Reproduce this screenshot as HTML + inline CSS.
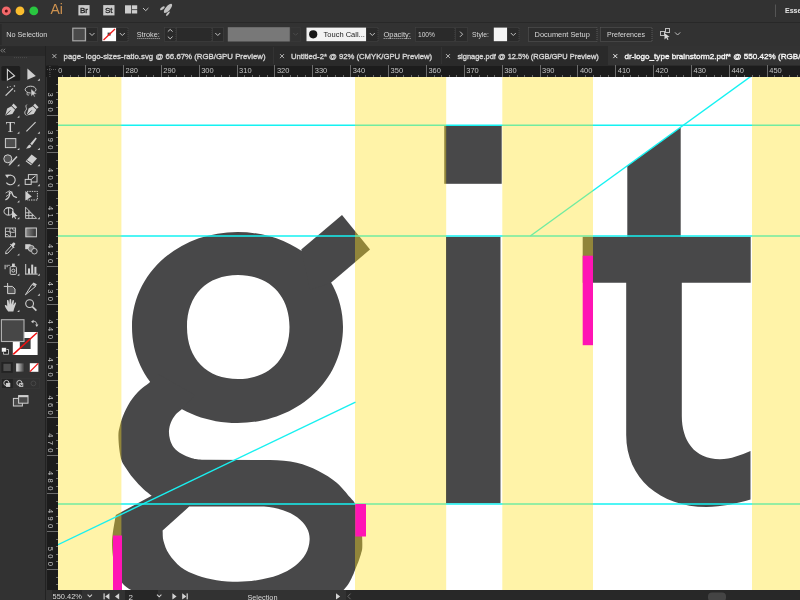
<!DOCTYPE html>
<html><head><meta charset="utf-8">
<style>
*{margin:0;padding:0;box-sizing:border-box}
html,body{width:800px;height:600px;overflow:hidden;background:#323232;font-family:"Liberation Sans",sans-serif;color:#d6d6d6}
.abs{position:absolute}
#app{will-change:transform;position:absolute;left:0;top:0;width:800px;height:600px;overflow:hidden;background:#323232}
#topbar{left:0;top:0;width:800px;height:22px;background:#323232}
#sep1{left:0;top:22px;width:800px;height:1px;background:#282828}
#ctrl{left:0;top:23px;width:800px;height:23px;background:#323232}
.t{position:absolute;white-space:nowrap;font-size:8.5px;line-height:10px;color:#d8d8d8}
#tabs{left:46px;top:46px;width:754px;height:19.5px;background:#2a2a2a}
#tabactive{left:608px;top:46px;width:192px;height:19px;background:#333333}
#hruler{left:46px;top:65.5px;width:754px;height:11.5px;background:#1c1c1c}
#vruler{left:46.6px;top:65.5px;width:11.4px;height:524.5px;background:#1c1c1c}
#status{left:46px;top:590px;width:754px;height:10px;background:#282828}
#tools{left:0;top:46px;width:46px;height:554px;background:#323232}
#toolhead{left:0;top:46px;width:46px;height:10px;background:#2a2a2a}
.tb{font-weight:normal;font-size:8.2px;color:#d4d4d4;-webkit-text-stroke:0.35px currentColor}
.fld{position:absolute;background:#2b2b2b;border:1px dotted #444}
</style></head><body>
<div id="app">
<div id="topbar" class="abs"></div>
<div id="sep1" class="abs"></div>
<div id="ctrl" class="abs"></div>
<div id="tools" class="abs"></div>
<div id="toolhead" class="abs"></div>
<div id="tabs" class="abs"></div>
<div id="tabactive" class="abs"></div>
<svg class="abs" style="left:58px;top:77px" width="742" height="513" viewBox="58 77 742 513">
<rect x="58" y="76" width="742" height="514" fill="#ffffff"/>
<g fill="#484849">
<path fill-rule="evenodd" d="M237.5 232 C296 232 343 273 343 327 C343 382 296 423 237.5 423 C179 423 132 382 132 327 C132 273 179 232 237.5 232 Z M238 275 C207 275 187 295 187 327 C187 359 207 379 238 379 C269 379 289.5 359 289.5 327 C289.5 295 269 275 238 275 Z"/>
<path d="M301.25 249.5 L342 215 L370 249.5 L331.25 282.5 L310 290 Z"/>
<path fill-rule="evenodd" d="M158.0 374.0 C155.0 377.0 152.0 380.3 149.0 383.0 C146.0 385.7 143.2 386.8 140.0 390.0 C136.8 393.2 132.8 397.7 130.0 402.0 C127.2 406.3 124.8 411.7 123.0 416.0 C121.2 420.3 120.2 424.7 119.4 428.0 C118.6 431.3 118.4 432.3 118.4 436.0 C118.4 439.7 118.9 446.0 119.4 450.0 C119.9 454.0 120.5 457.2 121.4 460.0 C122.3 462.8 123.0 463.6 125.0 466.7 C127.0 469.8 130.2 474.6 133.3 478.3 C136.4 482.0 140.2 486.1 143.3 489.0 C146.4 491.9 148.9 493.5 151.7 495.8 L115.8 515.0 C114.8 521.0 113.4 528.0 112.8 533.0 C112.2 538.0 111.9 540.5 112.0 545.0 C112.1 549.5 112.7 555.5 113.5 560.0 C114.3 564.5 115.4 568.0 117.0 572.0 C118.6 576.0 120.5 580.9 123.0 584.0 C125.5 587.1 128.3 588.2 132.0 590.5 C135.7 592.8 140.3 595.8 145.0 598.0 C149.7 600.2 155.0 602.0 160.0 604.0 L325.0 604.0 C328.7 601.7 332.8 599.4 336.0 597.0 C339.2 594.6 341.8 591.8 344.0 589.5 C346.2 587.2 347.5 585.4 349.0 583.0 C350.5 580.6 352.0 577.2 353.0 575.0 C354.0 572.8 354.0 572.5 355.0 570.0 C356.0 567.5 358.0 562.8 359.0 560.0 C360.0 557.2 360.6 555.2 361.2 553.0 C361.8 550.8 362.2 550.5 362.3 546.7 C362.4 542.9 362.2 535.3 361.7 530.0 C361.2 524.7 360.4 519.3 359.3 515.0 C358.2 510.7 356.9 506.9 355.3 504.0 C353.8 501.1 353.1 500.9 350.0 497.3 C346.9 493.8 342.0 487.1 336.7 482.7 C331.4 478.3 324.7 474.0 318.0 470.7 C311.3 467.4 304.7 464.5 296.7 462.7 C288.7 460.9 279.4 460.4 270.0 460.0 L204.0 459.8 C197.7 459.5 195.8 459.2 192.0 458.2 C188.2 457.2 184.5 455.5 181.5 453.8 C178.5 452.0 175.9 450.1 174.0 447.8 C172.1 445.4 170.8 442.4 170.0 439.5 C169.2 436.6 168.8 433.4 169.0 430.5 C169.2 427.6 169.9 424.9 171.0 422.2 C172.1 419.6 173.8 416.9 175.5 414.8 C177.2 412.6 179.5 411.2 181.5 409.5 L195 395 Z M189.2 506.6 L264.0 506.6 C271.2 507.2 277.5 508.4 283.0 510.2 C288.5 512.0 293.2 514.3 297.2 517.3 C301.2 520.3 304.7 524.2 306.8 528.0 C308.9 531.8 309.8 535.6 309.6 539.9 C309.4 544.2 308.1 549.6 305.6 554.0 C303.2 558.4 299.4 562.5 294.9 566.0 C290.3 569.5 284.6 572.6 278.3 575.0 C272.0 577.4 263.6 579.1 256.9 580.2 C250.2 581.3 244.6 581.7 237.9 581.7 C231.2 581.7 223.2 581.2 216.5 580.2 C209.8 579.2 203.4 577.7 197.5 575.5 C191.6 573.3 185.7 570.8 180.9 567.2 C176.2 563.6 171.9 558.5 169.0 554.1 C166.1 549.7 164.6 545.0 163.5 541.0 C162.4 537.0 162.9 533.9 162.6 530.4 Z"/>
<rect x="444.25" y="126" width="57.45" height="57.8"/>
<rect x="446" y="236.8" width="54.5" height="266.5"/>
<path d="M627.3 166 L680.7 127.3 L680.7 236.7 L750.7 236.7 L750.7 282.7 L681.8 282.7 L681.8 416 C681.8 440 694 459.2 720 459.2 C731 459.2 741 455 750.5 451 L750.5 499.6 C737 503.5 722 507 706.5 507 C660 507 626.2 478 626.2 435 L626.2 282.7 L582.7 282.7 L582.7 236.7 L627.3 236.7 Z"/>
</g>
<g stroke="#14f2f2" stroke-width="1.4" fill="none">
<line x1="58" y1="125.3" x2="800" y2="125.3"/>
<line x1="58" y1="236" x2="800" y2="236"/>
<line x1="58" y1="504" x2="800" y2="504"/>
<line x1="530.3" y1="236" x2="751.4" y2="76"/>
</g>
<g fill="#ffe126" fill-opacity="0.40">
<rect x="58" y="76" width="63.4" height="514"/>
<rect x="355" y="76" width="91.2" height="514"/>
<rect x="502.3" y="76" width="90.7" height="514"/>
<rect x="752" y="76" width="48" height="514"/>
</g>
<g fill="#ff14b4">
<rect x="113" y="535.5" width="9" height="55"/>
<rect x="355.3" y="504" width="10.7" height="32.5"/>
<rect x="582.7" y="255.7" width="10.3" height="89.5"/>
</g>
<g stroke="#19f0f0" stroke-width="1.4" fill="none">
<line x1="58" y1="544.7" x2="355.5" y2="402.1"/>
</g>
</svg>
<div id="hruler" class="abs"></div>
<div id="vruler" class="abs"></div>
<svg class="abs" style="left:46px;top:65px" width="754" height="525" viewBox="46 65 754 525" font-family="Liberation Sans, sans-serif" font-size="8" fill="#c4c4c4">
<g stroke="#6c6c6c" stroke-width="1">
<line x1="62.5" y1="75" x2="62.5" y2="77"/>
<line x1="70.5" y1="75" x2="70.5" y2="77"/>
<line x1="78.5" y1="75" x2="78.5" y2="77"/>
<line x1="85.5" y1="65" x2="85.5" y2="77"/>
<line x1="93.5" y1="75" x2="93.5" y2="77"/>
<line x1="100.5" y1="75" x2="100.5" y2="77"/>
<line x1="108.5" y1="75" x2="108.5" y2="77"/>
<line x1="115.5" y1="75" x2="115.5" y2="77"/>
<line x1="123.5" y1="65" x2="123.5" y2="77"/>
<line x1="131.5" y1="75" x2="131.5" y2="77"/>
<line x1="138.5" y1="75" x2="138.5" y2="77"/>
<line x1="146.5" y1="75" x2="146.5" y2="77"/>
<line x1="153.5" y1="75" x2="153.5" y2="77"/>
<line x1="161.5" y1="65" x2="161.5" y2="77"/>
<line x1="168.5" y1="75" x2="168.5" y2="77"/>
<line x1="176.5" y1="75" x2="176.5" y2="77"/>
<line x1="184.5" y1="75" x2="184.5" y2="77"/>
<line x1="191.5" y1="75" x2="191.5" y2="77"/>
<line x1="199.5" y1="65" x2="199.5" y2="77"/>
<line x1="206.5" y1="75" x2="206.5" y2="77"/>
<line x1="214.5" y1="75" x2="214.5" y2="77"/>
<line x1="221.5" y1="75" x2="221.5" y2="77"/>
<line x1="229.5" y1="75" x2="229.5" y2="77"/>
<line x1="237.5" y1="65" x2="237.5" y2="77"/>
<line x1="244.5" y1="75" x2="244.5" y2="77"/>
<line x1="252.5" y1="75" x2="252.5" y2="77"/>
<line x1="259.5" y1="75" x2="259.5" y2="77"/>
<line x1="267.5" y1="75" x2="267.5" y2="77"/>
<line x1="274.5" y1="65" x2="274.5" y2="77"/>
<line x1="282.5" y1="75" x2="282.5" y2="77"/>
<line x1="290.5" y1="75" x2="290.5" y2="77"/>
<line x1="297.5" y1="75" x2="297.5" y2="77"/>
<line x1="305.5" y1="75" x2="305.5" y2="77"/>
<line x1="312.5" y1="65" x2="312.5" y2="77"/>
<line x1="320.5" y1="75" x2="320.5" y2="77"/>
<line x1="327.5" y1="75" x2="327.5" y2="77"/>
<line x1="335.5" y1="75" x2="335.5" y2="77"/>
<line x1="343.5" y1="75" x2="343.5" y2="77"/>
<line x1="350.5" y1="65" x2="350.5" y2="77"/>
<line x1="358.5" y1="75" x2="358.5" y2="77"/>
<line x1="365.5" y1="75" x2="365.5" y2="77"/>
<line x1="373.5" y1="75" x2="373.5" y2="77"/>
<line x1="380.5" y1="75" x2="380.5" y2="77"/>
<line x1="388.5" y1="65" x2="388.5" y2="77"/>
<line x1="396.5" y1="75" x2="396.5" y2="77"/>
<line x1="403.5" y1="75" x2="403.5" y2="77"/>
<line x1="411.5" y1="75" x2="411.5" y2="77"/>
<line x1="418.5" y1="75" x2="418.5" y2="77"/>
<line x1="426.5" y1="65" x2="426.5" y2="77"/>
<line x1="434.5" y1="75" x2="434.5" y2="77"/>
<line x1="441.5" y1="75" x2="441.5" y2="77"/>
<line x1="449.5" y1="75" x2="449.5" y2="77"/>
<line x1="456.5" y1="75" x2="456.5" y2="77"/>
<line x1="464.5" y1="65" x2="464.5" y2="77"/>
<line x1="471.5" y1="75" x2="471.5" y2="77"/>
<line x1="479.5" y1="75" x2="479.5" y2="77"/>
<line x1="487.5" y1="75" x2="487.5" y2="77"/>
<line x1="494.5" y1="75" x2="494.5" y2="77"/>
<line x1="502.5" y1="65" x2="502.5" y2="77"/>
<line x1="509.5" y1="75" x2="509.5" y2="77"/>
<line x1="517.5" y1="75" x2="517.5" y2="77"/>
<line x1="524.5" y1="75" x2="524.5" y2="77"/>
<line x1="532.5" y1="75" x2="532.5" y2="77"/>
<line x1="540.5" y1="65" x2="540.5" y2="77"/>
<line x1="547.5" y1="75" x2="547.5" y2="77"/>
<line x1="555.5" y1="75" x2="555.5" y2="77"/>
<line x1="562.5" y1="75" x2="562.5" y2="77"/>
<line x1="570.5" y1="75" x2="570.5" y2="77"/>
<line x1="577.5" y1="65" x2="577.5" y2="77"/>
<line x1="585.5" y1="75" x2="585.5" y2="77"/>
<line x1="593.5" y1="75" x2="593.5" y2="77"/>
<line x1="600.5" y1="75" x2="600.5" y2="77"/>
<line x1="608.5" y1="75" x2="608.5" y2="77"/>
<line x1="615.5" y1="65" x2="615.5" y2="77"/>
<line x1="623.5" y1="75" x2="623.5" y2="77"/>
<line x1="630.5" y1="75" x2="630.5" y2="77"/>
<line x1="638.5" y1="75" x2="638.5" y2="77"/>
<line x1="646.5" y1="75" x2="646.5" y2="77"/>
<line x1="653.5" y1="65" x2="653.5" y2="77"/>
<line x1="661.5" y1="75" x2="661.5" y2="77"/>
<line x1="668.5" y1="75" x2="668.5" y2="77"/>
<line x1="676.5" y1="75" x2="676.5" y2="77"/>
<line x1="683.5" y1="75" x2="683.5" y2="77"/>
<line x1="691.5" y1="65" x2="691.5" y2="77"/>
<line x1="699.5" y1="75" x2="699.5" y2="77"/>
<line x1="706.5" y1="75" x2="706.5" y2="77"/>
<line x1="714.5" y1="75" x2="714.5" y2="77"/>
<line x1="721.5" y1="75" x2="721.5" y2="77"/>
<line x1="729.5" y1="65" x2="729.5" y2="77"/>
<line x1="736.5" y1="75" x2="736.5" y2="77"/>
<line x1="744.5" y1="75" x2="744.5" y2="77"/>
<line x1="752.5" y1="75" x2="752.5" y2="77"/>
<line x1="759.5" y1="75" x2="759.5" y2="77"/>
<line x1="767.5" y1="65" x2="767.5" y2="77"/>
<line x1="774.5" y1="75" x2="774.5" y2="77"/>
<line x1="782.5" y1="75" x2="782.5" y2="77"/>
<line x1="789.5" y1="75" x2="789.5" y2="77"/>
<line x1="797.5" y1="75" x2="797.5" y2="77"/>
<line x1="805.5" y1="65" x2="805.5" y2="77"/>
<line x1="56" y1="84.5" x2="58" y2="84.5"/>
<line x1="56" y1="92.5" x2="58" y2="92.5"/>
<line x1="56" y1="99.5" x2="58" y2="99.5"/>
<line x1="56" y1="107.5" x2="58" y2="107.5"/>
<line x1="47" y1="115.5" x2="58" y2="115.5"/>
<line x1="56" y1="122.5" x2="58" y2="122.5"/>
<line x1="56" y1="130.5" x2="58" y2="130.5"/>
<line x1="56" y1="137.5" x2="58" y2="137.5"/>
<line x1="56" y1="145.5" x2="58" y2="145.5"/>
<line x1="47" y1="152.5" x2="58" y2="152.5"/>
<line x1="56" y1="160.5" x2="58" y2="160.5"/>
<line x1="56" y1="168.5" x2="58" y2="168.5"/>
<line x1="56" y1="175.5" x2="58" y2="175.5"/>
<line x1="56" y1="183.5" x2="58" y2="183.5"/>
<line x1="47" y1="190.5" x2="58" y2="190.5"/>
<line x1="56" y1="198.5" x2="58" y2="198.5"/>
<line x1="56" y1="205.5" x2="58" y2="205.5"/>
<line x1="56" y1="213.5" x2="58" y2="213.5"/>
<line x1="56" y1="221.5" x2="58" y2="221.5"/>
<line x1="47" y1="228.5" x2="58" y2="228.5"/>
<line x1="56" y1="236.5" x2="58" y2="236.5"/>
<line x1="56" y1="243.5" x2="58" y2="243.5"/>
<line x1="56" y1="251.5" x2="58" y2="251.5"/>
<line x1="56" y1="258.5" x2="58" y2="258.5"/>
<line x1="47" y1="266.5" x2="58" y2="266.5"/>
<line x1="56" y1="274.5" x2="58" y2="274.5"/>
<line x1="56" y1="281.5" x2="58" y2="281.5"/>
<line x1="56" y1="289.5" x2="58" y2="289.5"/>
<line x1="56" y1="296.5" x2="58" y2="296.5"/>
<line x1="47" y1="304.5" x2="58" y2="304.5"/>
<line x1="56" y1="311.5" x2="58" y2="311.5"/>
<line x1="56" y1="319.5" x2="58" y2="319.5"/>
<line x1="56" y1="327.5" x2="58" y2="327.5"/>
<line x1="56" y1="334.5" x2="58" y2="334.5"/>
<line x1="47" y1="342.5" x2="58" y2="342.5"/>
<line x1="56" y1="349.5" x2="58" y2="349.5"/>
<line x1="56" y1="357.5" x2="58" y2="357.5"/>
<line x1="56" y1="364.5" x2="58" y2="364.5"/>
<line x1="56" y1="372.5" x2="58" y2="372.5"/>
<line x1="47" y1="380.5" x2="58" y2="380.5"/>
<line x1="56" y1="387.5" x2="58" y2="387.5"/>
<line x1="56" y1="395.5" x2="58" y2="395.5"/>
<line x1="56" y1="402.5" x2="58" y2="402.5"/>
<line x1="56" y1="410.5" x2="58" y2="410.5"/>
<line x1="47" y1="417.5" x2="58" y2="417.5"/>
<line x1="56" y1="425.5" x2="58" y2="425.5"/>
<line x1="56" y1="433.5" x2="58" y2="433.5"/>
<line x1="56" y1="440.5" x2="58" y2="440.5"/>
<line x1="56" y1="448.5" x2="58" y2="448.5"/>
<line x1="47" y1="455.5" x2="58" y2="455.5"/>
<line x1="56" y1="463.5" x2="58" y2="463.5"/>
<line x1="56" y1="470.5" x2="58" y2="470.5"/>
<line x1="56" y1="478.5" x2="58" y2="478.5"/>
<line x1="56" y1="486.5" x2="58" y2="486.5"/>
<line x1="47" y1="493.5" x2="58" y2="493.5"/>
<line x1="56" y1="501.5" x2="58" y2="501.5"/>
<line x1="56" y1="508.5" x2="58" y2="508.5"/>
<line x1="56" y1="516.5" x2="58" y2="516.5"/>
<line x1="56" y1="523.5" x2="58" y2="523.5"/>
<line x1="47" y1="531.5" x2="58" y2="531.5"/>
<line x1="56" y1="539.5" x2="58" y2="539.5"/>
<line x1="56" y1="546.5" x2="58" y2="546.5"/>
<line x1="56" y1="554.5" x2="58" y2="554.5"/>
<line x1="56" y1="561.5" x2="58" y2="561.5"/>
<line x1="47" y1="569.5" x2="58" y2="569.5"/>
<line x1="56" y1="577.5" x2="58" y2="577.5"/>
<line x1="56" y1="584.5" x2="58" y2="584.5"/>
</g>
<text x="58.3" y="73.4" textLength="3.9" lengthAdjust="spacingAndGlyphs">0</text>
<text x="87.6" y="73.4" textLength="12.5" lengthAdjust="spacingAndGlyphs">270</text>
<text x="125.5" y="73.4" textLength="12.5" lengthAdjust="spacingAndGlyphs">280</text>
<text x="163.3" y="73.4" textLength="12.5" lengthAdjust="spacingAndGlyphs">290</text>
<text x="201.2" y="73.4" textLength="12.5" lengthAdjust="spacingAndGlyphs">300</text>
<text x="239.1" y="73.4" textLength="12.5" lengthAdjust="spacingAndGlyphs">310</text>
<text x="276.9" y="73.4" textLength="12.5" lengthAdjust="spacingAndGlyphs">320</text>
<text x="314.8" y="73.4" textLength="12.5" lengthAdjust="spacingAndGlyphs">330</text>
<text x="352.7" y="73.4" textLength="12.5" lengthAdjust="spacingAndGlyphs">340</text>
<text x="390.6" y="73.4" textLength="12.5" lengthAdjust="spacingAndGlyphs">350</text>
<text x="428.4" y="73.4" textLength="12.5" lengthAdjust="spacingAndGlyphs">360</text>
<text x="466.3" y="73.4" textLength="12.5" lengthAdjust="spacingAndGlyphs">370</text>
<text x="504.2" y="73.4" textLength="12.5" lengthAdjust="spacingAndGlyphs">380</text>
<text x="542.0" y="73.4" textLength="12.5" lengthAdjust="spacingAndGlyphs">390</text>
<text x="579.9" y="73.4" textLength="12.5" lengthAdjust="spacingAndGlyphs">400</text>
<text x="617.8" y="73.4" textLength="12.5" lengthAdjust="spacingAndGlyphs">410</text>
<text x="655.6" y="73.4" textLength="12.5" lengthAdjust="spacingAndGlyphs">420</text>
<text x="693.5" y="73.4" textLength="12.5" lengthAdjust="spacingAndGlyphs">430</text>
<text x="731.4" y="73.4" textLength="12.5" lengthAdjust="spacingAndGlyphs">440</text>
<text x="769.3" y="73.4" textLength="12.5" lengthAdjust="spacingAndGlyphs">450</text>
<text x="807.1" y="73.4" textLength="12.5" lengthAdjust="spacingAndGlyphs">460</text>
<text transform="translate(47.5 92.4) rotate(90)" font-size="7.5" letter-spacing="3.35">380</text>
<text transform="translate(47.5 130.3) rotate(90)" font-size="7.5" letter-spacing="3.35">390</text>
<text transform="translate(47.5 168.1) rotate(90)" font-size="7.5" letter-spacing="3.35">400</text>
<text transform="translate(47.5 206.0) rotate(90)" font-size="7.5" letter-spacing="3.35">410</text>
<text transform="translate(47.5 243.9) rotate(90)" font-size="7.5" letter-spacing="3.35">420</text>
<text transform="translate(47.5 281.8) rotate(90)" font-size="7.5" letter-spacing="3.35">430</text>
<text transform="translate(47.5 319.6) rotate(90)" font-size="7.5" letter-spacing="3.35">440</text>
<text transform="translate(47.5 357.5) rotate(90)" font-size="7.5" letter-spacing="3.35">450</text>
<text transform="translate(47.5 395.4) rotate(90)" font-size="7.5" letter-spacing="3.35">460</text>
<text transform="translate(47.5 433.2) rotate(90)" font-size="7.5" letter-spacing="3.35">470</text>
<text transform="translate(47.5 471.1) rotate(90)" font-size="7.5" letter-spacing="3.35">480</text>
<text transform="translate(47.5 509.0) rotate(90)" font-size="7.5" letter-spacing="3.35">490</text>
<text transform="translate(47.5 546.8) rotate(90)" font-size="7.5" letter-spacing="3.35">500</text>
<rect x="46.6" y="65.5" width="11.4" height="11.5" fill="#1c1c1c"/>
<g stroke="#5c5c5c" stroke-width="1" stroke-dasharray="1 1"><line x1="47" y1="69.5" x2="57" y2="69.5"/><line x1="49.9" y1="66" x2="49.9" y2="77"/></g>
</svg>
<div id="status" class="abs"></div>
<svg class="abs" style="left:0;top:46px" width="46" height="554" viewBox="0 46 46 554">
<rect x="0" y="47" width="45" height="8.5" fill="#292929"/>
<rect x="45" y="46" width="1.4" height="554" fill="#222"/>
<g fill="none" stroke="#8c8c8c" stroke-width="0.9"><path d="M2.6 48.8 L1 50.6 L2.6 52.4"/><path d="M5 48.8 L3.4 50.6 L5 52.4"/></g>
<line x1="14" y1="57.6" x2="27" y2="57.6" stroke="#4c4c4c" stroke-width="1" stroke-dasharray="1 1"/>
<rect x="1.4" y="66" width="18.8" height="14.8" rx="1.5" fill="#1f1f1f"/>
<g fill="#cfcfcf" stroke="none">
<!-- sub-tool corner triangles -->
<path d="M39.8 78.6 L39.8 80.8 L37.6 80.8 Z"/>
<path d="M19.4 115.6 L19.4 117.8 L17.2 117.8 Z"/>
<path d="M19.4 131.6 L19.4 133.8 L17.2 133.8 Z"/><path d="M39.8 131.6 L39.8 133.8 L37.6 133.8 Z"/>
<path d="M19.4 147.8 L19.4 150 L17.2 150 Z"/><path d="M39.8 147.8 L39.8 150 L37.6 150 Z"/>
<path d="M19.4 164 L19.4 166.2 L17.2 166.2 Z"/><path d="M39.8 164 L39.8 166.2 L37.6 166.2 Z"/>
<path d="M19.4 184 L19.4 186.2 L17.2 186.2 Z"/><path d="M39.8 184 L39.8 186.2 L37.6 186.2 Z"/>
<path d="M19.4 200.2 L19.4 202.4 L17.2 202.4 Z"/>
<path d="M19.4 217 L19.4 219.2 L17.2 219.2 Z"/><path d="M39.8 217 L39.8 219.2 L37.6 219.2 Z"/>
<path d="M19.4 253.4 L19.4 255.6 L17.2 255.6 Z"/>
<path d="M19.4 273.6 L19.4 275.8 L17.2 275.8 Z"/><path d="M39.8 273.6 L39.8 275.8 L37.6 275.8 Z"/>
<path d="M39.8 293.6 L39.8 295.8 L37.6 295.8 Z"/>
<path d="M19.4 309.8 L19.4 312 L17.2 312 Z"/>
</g>
<!-- row1: selection / direct selection -->
<path d="M7.4 69.4 L7.4 80 L14.6 75.8 Z" fill="none" stroke="#d4d4d4" stroke-width="1.1" stroke-linejoin="miter"/>
<path d="M27.4 68.6 L27.4 79.8 L35.8 76 Z" fill="#cfcfcf"/>
<!-- row2: magic wand / lasso -->
<g stroke="#cfcfcf" stroke-width="1.3" fill="none"><line x1="5.6" y1="95.6" x2="13" y2="88.4"/></g>
<g fill="#cfcfcf"><circle cx="7.6" cy="87.2" r=".7"/><circle cx="14.4" cy="86" r=".8"/><circle cx="14.6" cy="91" r=".7"/><circle cx="10.2" cy="86.6" r=".5"/></g>
<g fill="none" stroke="#cfcfcf" stroke-width="1"><ellipse cx="30.6" cy="89.6" rx="5.4" ry="3.4"/><path d="M27.8 92.6 C26 94 27.6 96 29.2 94.6"/></g>
<path d="M31 88.8 L31 96.6 L33 94.8 L34.2 97 L35.2 96.4 L34 94.2 L36.8 94 Z" fill="#cfcfcf" stroke="#323232" stroke-width=".5"/>
<!-- row3: pen / curvature -->
<g fill="#cfcfcf">
<path d="M5.2 115.6 L7.2 108.6 L11.4 106.2 L15 109.8 L12.4 114 Z"/><path d="M11.8 105.4 L13.6 103.6 L17.2 107.2 L15.4 109 Z"/>
<path d="M24.6 115.6 L26.6 108.6 L30.8 106.2 L34.4 109.8 L31.8 114 Z" transform="translate(2 0)"/><path d="M33.2 105.4 L35 103.6 L38.6 107.2 L36.8 109 Z"/>
</g>
<path d="M5.2 115.6 L10.4 110.4" stroke="#323232" stroke-width=".9"/><path d="M26.6 115.6 L31.8 110.4" stroke="#323232" stroke-width=".9"/>
<path d="M26.8 104.6 C24.4 106.6 28 108.4 25.6 110.6 C24.2 112 24.6 114.4 26.4 115.4" fill="none" stroke="#cfcfcf" stroke-width=".9"/>
<!-- row4: type / line -->
<line x1="26.4" y1="131.4" x2="35.6" y2="122.2" stroke="#cfcfcf" stroke-width="1.1"/>
<!-- row5: rect / brush -->
<rect x="5.4" y="138.6" width="10.4" height="9" fill="#4e4e4e" stroke="#cfcfcf" stroke-width="1"/>
<g fill="#cfcfcf"><path d="M35.6 137.6 L36.8 138.6 L32 145.2 L30.2 143.8 Z"/><path d="M29.6 144.4 L31.4 146 C30.4 148.2 28 148.6 26 148.4 C27.6 147.4 27.4 145.4 29.6 144.4 Z"/></g>
<!-- row6: shaper / eraser -->
<circle cx="7.8" cy="158.8" r="4" fill="#555" stroke="#cfcfcf" stroke-width="1"/>
<path d="M9.6 164.6 L17 156.6" stroke="#cfcfcf" stroke-width="1.5" fill="none"/><path d="M8.6 165.8 L9.2 163.8 L10.4 165 Z" fill="#cfcfcf"/>
<path d="M25.6 161.2 L31.6 154.6 L37 158.4 L31 165.2 Z" fill="#cfcfcf"/><path d="M26.6 160.2 L31.8 163.9" stroke="#323232" stroke-width=".9"/>
<!-- row7: rotate / scale -->
<path d="M7.4 176.2 A4.8 4.8 0 1 1 6.4 182.6" fill="none" stroke="#cfcfcf" stroke-width="1.1"/><path d="M5 174.8 L8.8 174.6 L7.4 178.2 Z" fill="#cfcfcf"/>
<g fill="none" stroke="#cfcfcf" stroke-width="1"><rect x="28.4" y="174.6" width="8.6" height="7.4"/><rect x="25.2" y="179.4" width="6" height="5" fill="#323232"/><line x1="31.4" y1="179.2" x2="35.6" y2="175.8"/></g>
<!-- row8: warp / free transform -->
<path d="M5.4 199.8 C8.4 198.6 10.2 195.6 9.4 192.4 C11 190.4 12.2 193 12.6 194.6 C13.6 198 16 196 16.6 198" fill="none" stroke="#cfcfcf" stroke-width="1.4"/><path d="M5.6 193 L9.8 190.6 M6 196.6 L12.4 192" stroke="#cfcfcf" stroke-width=".8" fill="none"/>
<rect x="27" y="191.4" width="10.4" height="8.6" fill="none" stroke="#cfcfcf" stroke-width="1" stroke-dasharray="1.4 1"/><path d="M25.4 191 L25.4 200.4 L31.8 196.4 Z" fill="#cfcfcf"/>
<!-- row9: shape builder / perspective -->
<g fill="none" stroke="#cfcfcf" stroke-width="1"><ellipse cx="8.6" cy="211.4" rx="4.6" ry="3.8"/><path d="M5.4 208.6 C8 207 12 207.6 13.4 209.4"/><line x1="8.6" y1="207.6" x2="8.6" y2="215.2"/></g>
<path d="M12 210.6 L12 218.6 L14 216.8 L15.2 219 L16.2 218.4 L15 216.2 L17.6 216 Z" fill="#cfcfcf"/>
<g fill="none" stroke="#cfcfcf" stroke-width=".9"><path d="M25.6 207.2 L25.6 218.4 L36.6 218.4 Z"/><line x1="25.6" y1="212.8" x2="31" y2="212.8"/><line x1="28.8" y1="210.4" x2="28.8" y2="218.4"/><line x1="32.2" y1="214" x2="32.2" y2="218.4"/><line x1="25.6" y1="215.6" x2="33.8" y2="215.6"/></g>
<!-- row10: mesh / gradient -->
<g fill="none" stroke="#cfcfcf" stroke-width=".9"><rect x="5.4" y="228" width="10.2" height="8.8"/><path d="M5.4 232 C8 230 12 234 15.6 231.6 M10.2 228 C8.6 231 12 234 10 236.8 M5.4 234.6 C8 233.6 9 236 10 236.8 M12.4 228 C12 230 14 230.6 15.6 230"/></g>
<defs><linearGradient id="gr1" x1="0" x2="1" y1="0" y2="0"><stop offset="0" stop-color="#e8e8e8"/><stop offset="1" stop-color="#2e2e2e"/></linearGradient><linearGradient id="gr2" x1="0" x2="1" y1="0" y2="0"><stop offset="0" stop-color="#8a8a8a"/><stop offset="1" stop-color="#333"/></linearGradient></defs>
<rect x="25.8" y="228" width="10.6" height="8.8" fill="url(#gr2)" stroke="#cfcfcf" stroke-width="1"/>
<!-- row11: eyedropper / blend -->
<path d="M5.6 253.8 L6 251.6 L11.6 245.4 L13.4 247 L7.8 253.2 Z" fill="none" stroke="#cfcfcf" stroke-width="1"/><path d="M11.4 244.4 L13 242.8 C14 241.8 16.2 243.6 15 244.8 L13.6 246.4 L14.6 247.4 L13.8 248.2 L10 244.6 L10.8 243.8 Z" fill="#cfcfcf"/>
<rect x="25.2" y="244.2" width="5.4" height="5" fill="#cfcfcf"/><circle cx="31.2" cy="248.4" r="3" fill="#777" stroke="#cfcfcf" stroke-width=".9"/><circle cx="34.4" cy="251.2" r="2.8" fill="#323232" stroke="#cfcfcf" stroke-width=".9"/>
<!-- row12: symbol sprayer / graph -->
<g fill="none" stroke="#cfcfcf" stroke-width="1"><rect x="10.2" y="266.6" width="6.2" height="7.8" rx="1"/><circle cx="13.3" cy="270.6" r="1.5"/></g><rect x="12" y="263.6" width="2.8" height="3" fill="#cfcfcf"/>
<g fill="#cfcfcf"><rect x="4.6" y="264.8" width="1" height="4.4"/><rect x="6.6" y="264.8" width="1" height="2.4"/><rect x="8.4" y="264.8" width="1.2" height="1.2"/></g>
<g fill="#cfcfcf"><rect x="25.2" y="264" width="1" height="10.4"/><rect x="25.2" y="273.6" width="12.4" height="1"/><rect x="28" y="268.4" width="2" height="5.4"/><rect x="31.2" y="264.6" width="2" height="9.2"/><rect x="34.4" y="266.8" width="2" height="7"/></g>
<!-- row13: artboard / slice -->
<g fill="none" stroke="#cfcfcf" stroke-width="1"><line x1="7.6" y1="283" x2="7.6" y2="288"/><line x1="3.8" y1="286.4" x2="9" y2="286.4"/></g><path d="M7.6 286.4 L12.4 286.4 L15 289 L15 293.6 L7.6 293.6 Z" fill="#555" stroke="#cfcfcf" stroke-width="1"/>
<path d="M25.4 294.8 L32 284.4 L35.6 286.4 Z" fill="none" stroke="#cfcfcf" stroke-width="1"/><path d="M32.2 284 L33.4 282.4 L36.8 284.2 L35.8 286 Z" fill="#cfcfcf"/>
<!-- row14: hand / zoom -->
<path d="M8.2 311.6 C6.4 309 5 306.8 4.8 305.4 C5.4 304.6 6.4 305 7.2 306.4 L7 300.6 C7.6 299.8 8.4 300 8.6 300.8 L9.2 304.4 L9.6 299.4 C10.2 298.8 11 299 11.2 299.8 L11.4 304.4 L12.6 300.2 C13.2 299.8 14 300 14 300.8 L13.4 305.2 L15 302.6 C15.8 302.4 16.2 303 16 303.6 L14 309 L13.4 311.6 Z" fill="#cfcfcf"/>
<circle cx="29.6" cy="303.6" r="3.9" fill="none" stroke="#cfcfcf" stroke-width="1.1"/><line x1="32.4" y1="306.6" x2="36.4" y2="310.6" stroke="#cfcfcf" stroke-width="1.6"/>
<!-- fill / stroke -->
<rect x="12.8" y="332" width="24.8" height="23" fill="#fff"/><rect x="19.8" y="338" width="10.8" height="11" fill="#3a3a3a"/>
<line x1="13.2" y1="354.4" x2="37" y2="332.8" stroke="#f01010" stroke-width="1.5"/>
<rect x="1.4" y="319.7" width="22.6" height="21.8" fill="#474747" stroke="#b4b4b4" stroke-width="1.1"/>
<path d="M32.4 321.6 C34.6 320.6 36.8 322 36.8 324.6" fill="none" stroke="#cfcfcf" stroke-width="1"/><path d="M31 321.8 L33.6 319.8 L33.4 323.2 Z M35.2 324.6 L38.4 324.6 L36.8 327 Z" fill="#cfcfcf"/>
<rect x="3.6" y="349.6" width="4.8" height="4.6" fill="#222" stroke="#ddd" stroke-width=".8"/><rect x="1.6" y="347.6" width="4.6" height="4.4" fill="#f4f4f4" stroke="#333" stroke-width=".5"/>
<!-- colour / gradient / none -->
<rect x="1.4" y="362" width="11.4" height="10.8" fill="#232323"/><rect x="3.4" y="363.8" width="7.4" height="7.2" fill="#4e4e4e"/>
<rect x="16.2" y="363.4" width="8.4" height="8.2" fill="url(#gr1)"/>
<rect x="29.8" y="363.2" width="8.6" height="8.6" fill="#fff"/><line x1="30" y1="371.6" x2="38.2" y2="363.4" stroke="#f01010" stroke-width="1.3"/>
<!-- draw modes -->
<rect x="1.4" y="378.6" width="11.4" height="10" fill="#232323"/><rect x="1.4" y="378.6" width="38" height="10" fill="none" stroke="#3a3a3a" stroke-width=".6"/>
<g fill="none" stroke="#cfcfcf" stroke-width=".9"><circle cx="6.4" cy="383" r="2.6"/><rect x="6.4" y="383.4" width="3.4" height="3" fill="#cfcfcf"/><circle cx="19.4" cy="383" r="2.6"/><rect x="19.6" y="383.6" width="3.2" height="2.8"/></g>
<circle cx="33.4" cy="383.4" r="2.4" fill="none" stroke="#4a4a4a" stroke-width=".9"/>
<!-- screen mode -->
<rect x="13.4" y="398.4" width="9" height="7.6" fill="#4a4a4a" stroke="#cfcfcf" stroke-width="1"/><rect x="18.6" y="395.6" width="9.4" height="7.6" fill="#4a4a4a" stroke="#cfcfcf" stroke-width="1"/><rect x="18.6" y="395.6" width="9.4" height="1.6" fill="#cfcfcf"/>
</svg>
<div class="t" style="left:5.8px;top:119.8px;font-family:'Liberation Serif',serif;font-size:15px;line-height:15px;color:#d4d4d4">T</div>
<!-- top bar -->
<svg class="abs" style="left:0;top:0" width="800" height="22" viewBox="0 0 800 22">
<circle cx="6.3" cy="10.9" r="4.5" fill="#f4686a"/><circle cx="6.3" cy="10.9" r="1.5" fill="#5a1014"/>
<circle cx="20" cy="10.9" r="4.4" fill="#fbbd2e"/>
<circle cx="33.8" cy="10.9" r="4.4" fill="#29c740"/>
<rect x="78.4" y="5.1" width="11.2" height="10.3" fill="#cbcbcb"/>
<rect x="103.2" y="5.1" width="11.3" height="10.3" fill="#cbcbcb"/>
<g fill="#cdcdcd"><rect x="125" y="5.3" width="6.2" height="8.2"/><rect x="132" y="5.3" width="5.2" height="4"/><rect x="132" y="10.1" width="5.2" height="3.4"/></g>
<path d="M143 8 L145.7 10.7 L148.4 8" fill="none" stroke="#c4c4c4" stroke-width="1"/>
<g fill="#c2c2c2"><ellipse cx="168" cy="8.4" rx="5.8" ry="2.3" transform="rotate(-49.3 168 8.4)"/><ellipse cx="162.4" cy="8.25" rx="2.8" ry="1.2" transform="rotate(-38 162.4 8.25)"/><ellipse cx="167.9" cy="13.7" rx="2.7" ry="1" transform="rotate(-51 167.9 13.7)"/></g>
<rect x="775" y="4.5" width="1" height="12.5" fill="#555"/>
</svg>
<div class="t" style="left:50.4px;top:1.3px;font-size:14px;line-height:16px;color:#cf9350">Ai</div>
<div class="t" style="left:80px;top:5.6px;font-size:8px;color:#222;-webkit-text-stroke:.3px #222">Br</div>
<div class="t" style="left:105px;top:5.6px;font-size:8px;color:#222;-webkit-text-stroke:.3px #222">St</div>
<div class="t" style="left:785px;top:5px;line-height:11px;color:#e6e6e6;font-weight:bold;font-size:8px;transform:scaleX(.88);transform-origin:0 0">Essentials</div>
<!-- control bar -->
<div class="t" style="left:6.2px;top:29.8px;font-size:7.28px">No Selection</div>
<svg class="abs" style="left:0;top:23px" width="800" height="23" viewBox="0 23 800 23">
<g fill="#2a2a2a" stroke="#444" stroke-width="1" stroke-dasharray="1 1">
<rect x="86.5" y="27.5" width="11" height="14"/>
<rect x="116.5" y="27.5" width="11.5" height="14"/>
<rect x="164.5" y="27.5" width="11.5" height="14"/><rect x="176.5" y="27.5" width="35.5" height="14"/><rect x="212.5" y="27.5" width="11" height="14"/>
<rect x="290.5" y="27.5" width="10" height="14" fill="#333" stroke="#3c3c3c"/>
<rect x="366.5" y="27.5" width="11.5" height="14"/>
<rect x="415.5" y="27.5" width="39.5" height="14"/><rect x="455.5" y="27.5" width="12" height="14"/>
<rect x="507.5" y="27.5" width="11.5" height="14"/>
<rect x="528.5" y="27.5" width="68.5" height="14" fill="#2d2d2d" stroke="#5a5a5a"/>
<rect x="600.5" y="27.5" width="51.5" height="14" fill="#2d2d2d" stroke="#5a5a5a"/>
</g>
<rect x="0" y="24" width="1.6" height="21" fill="#2a2a2a"/>
<rect x="72.8" y="28.2" width="12.6" height="12.6" fill="#4a4a4a" stroke="#a8a8a8" stroke-width="1.2"/>
<rect x="102.3" y="27.8" width="13.7" height="13.4" fill="#fff"/><rect x="107.6" y="32.6" width="3" height="3" fill="#444"/><line x1="103.5" y1="40" x2="115" y2="29" stroke="#f01818" stroke-width="1.3"/>
<rect x="227.8" y="27.2" width="62" height="14.3" fill="#787878"/>
<rect x="306.5" y="27.6" width="59.5" height="13.6" fill="#f2f2f2"/><circle cx="313.2" cy="34.3" r="4.1" fill="#161616"/>
<rect x="493.8" y="27.6" width="13.2" height="13.6" fill="#f4f4f4"/>
<g fill="none" stroke="#c0c0c0" stroke-width="1">
<path d="M89.5 33 L92 35.5 L94.5 33"/><path d="M119.8 33 L122.3 35.5 L124.8 33"/>
<path d="M167.8 31.6 L170.2 29.4 L172.6 31.6"/><path d="M167.8 36.6 L170.2 38.8 L172.6 36.6"/>
<path d="M215.3 33 L217.8 35.5 L220.3 33"/>
<path d="M293.3 33 L295.6 35.3 L297.9 33" stroke="#4a4a4a"/>
<path d="M369.8 33 L372.3 35.5 L374.8 33"/>
<path d="M460 31.6 L462.6 34.2 L460 36.8"/>
<path d="M510.8 33 L513.3 35.5 L515.8 33"/>
<path d="M675 32.4 L677.6 35 L680.2 32.4"/>
</g>
<g fill="none" stroke="#bdbdbd" stroke-width="1"><rect x="660.5" y="31.5" width="4" height="4"/><rect x="665.5" y="28.5" width="4" height="4"/></g>
<path d="M664.5 33 L664.5 39.5 L666.3 37.8 L667.5 40 L668.5 39.5 L667.4 37.3 L669.6 37.1 Z" fill="#d8d8d8"/>
<g stroke="#8a8a8a" stroke-width="1" stroke-dasharray="1.5 .5"><line x1="137" y1="38.5" x2="160" y2="38.5"/><line x1="383.5" y1="38.5" x2="411" y2="38.5"/></g>
</svg>
<div class="t" style="left:136.8px;top:29.8px;font-size:7.22px">Stroke:</div>
<div class="t" style="left:323.6px;top:29.8px;color:#222;font-size:7.5px">Touch Call...</div>
<div class="t" style="left:383.4px;top:29.8px;font-size:7.5px">Opacity:</div>
<div class="t" style="left:418px;top:29.8px;font-size:7.2px;transform:scaleX(.92);transform-origin:0 0">100%</div>
<div class="t" style="left:472px;top:29.8px;font-size:7.2px;transform:scaleX(.944);transform-origin:0 0">Style:</div>
<div class="t" style="left:534.6px;top:29.8px;font-size:7.41px">Document Setup</div>
<div class="t" style="left:607px;top:29.8px;font-size:7.05px">Preferences</div>
<!-- tabs -->
<svg class="abs" style="left:46px;top:46px" width="754" height="19" viewBox="46 46 754 19"><path d="M52.4 54.1 L56.4 58.1 M56.4 54.1 L52.4 58.1" stroke="#b4b4b4" stroke-width="1" fill="none"/><path d="M280 54.1 L284 58.1 M284 54.1 L280 58.1" stroke="#b4b4b4" stroke-width="1" fill="none"/><path d="M446 54.1 L450 58.1 M450 54.1 L446 58.1" stroke="#b4b4b4" stroke-width="1" fill="none"/><path d="M613.3 54.1 L617.3 58.1 M617.3 54.1 L613.3 58.1" stroke="#f0f0f0" stroke-width="1" fill="none"/></svg>
<div class="t tb" style="left:63.6px;top:51.5px;font-size:7.835px">page- logo-sizes-ratio.svg @ 66.67% (RGB/GPU Preview)</div>
<div class="abs" style="left:273px;top:47px;width:1px;height:17px;background:#333"></div>
<div class="t tb" style="left:291px;top:51.5px;font-size:7.69px">Untitled-2* @ 92% (CMYK/GPU Preview)</div>
<div class="abs" style="left:441px;top:47px;width:1px;height:17px;background:#333"></div>
<div class="t tb" style="left:457.4px;top:51.5px;font-size:7.46px">signage.pdf @ 12.5% (RGB/GPU Preview)</div>
<div class="t tb" style="left:624.4px;top:51.5px;color:#f4f4f4;font-size:8.1px">dr-logo_type brainstorm2.pdf* @ 550.42% (RGB/GPU Preview)</div>
<!-- status bar -->
<div class="abs" style="left:46px;top:590px;width:300px;height:10px;background:#323232"></div>
<div class="abs" style="left:52px;top:590px;width:30px;height:10px;background:#282828"></div>
<div class="abs" style="left:125px;top:590px;width:33px;height:10px;background:#262626"></div>
<div class="t" style="left:52.6px;top:591.6px;font-size:7.42px">550.42%</div>
<div class="t" style="left:128.4px;top:592.6px;font-size:8px">2</div>
<div class="t" style="left:247.4px;top:592.7px;font-size:7.32px">Selection</div>
<svg class="abs" style="left:46px;top:590px" width="754" height="10" viewBox="46 590 754 10">
<g fill="none" stroke="#cfcfcf" stroke-width="1.1"><path d="M87.6 594.6 L89.8 596.8 L92 594.6"/><path d="M157 594.6 L159.2 596.8 L161.4 594.6"/></g>
<g fill="#d4d4d4"><rect x="103.5" y="593.4" width="1.2" height="6"/><path d="M109.4 593.2 L105.2 596.4 L109.4 599.6 Z"/><path d="M119.2 593.2 L115 596.4 L119.2 599.6 Z"/>
<path d="M172.4 593.2 L176.6 596.4 L172.4 599.6 Z"/><path d="M182.2 593.2 L186.4 596.4 L182.2 599.6 Z"/><rect x="186.6" y="593.4" width="1.2" height="6"/>
<path d="M336 593.2 L340.2 596.4 L336 599.6 Z"/></g>
<path d="M350.6 593.6 L347.8 596.4 L350.6 599.2" fill="none" stroke="#6a6a6a" stroke-width="1"/>
<rect x="708" y="592.5" width="18" height="9" rx="4" fill="#444"/>
</svg>

</div>
</body></html>
